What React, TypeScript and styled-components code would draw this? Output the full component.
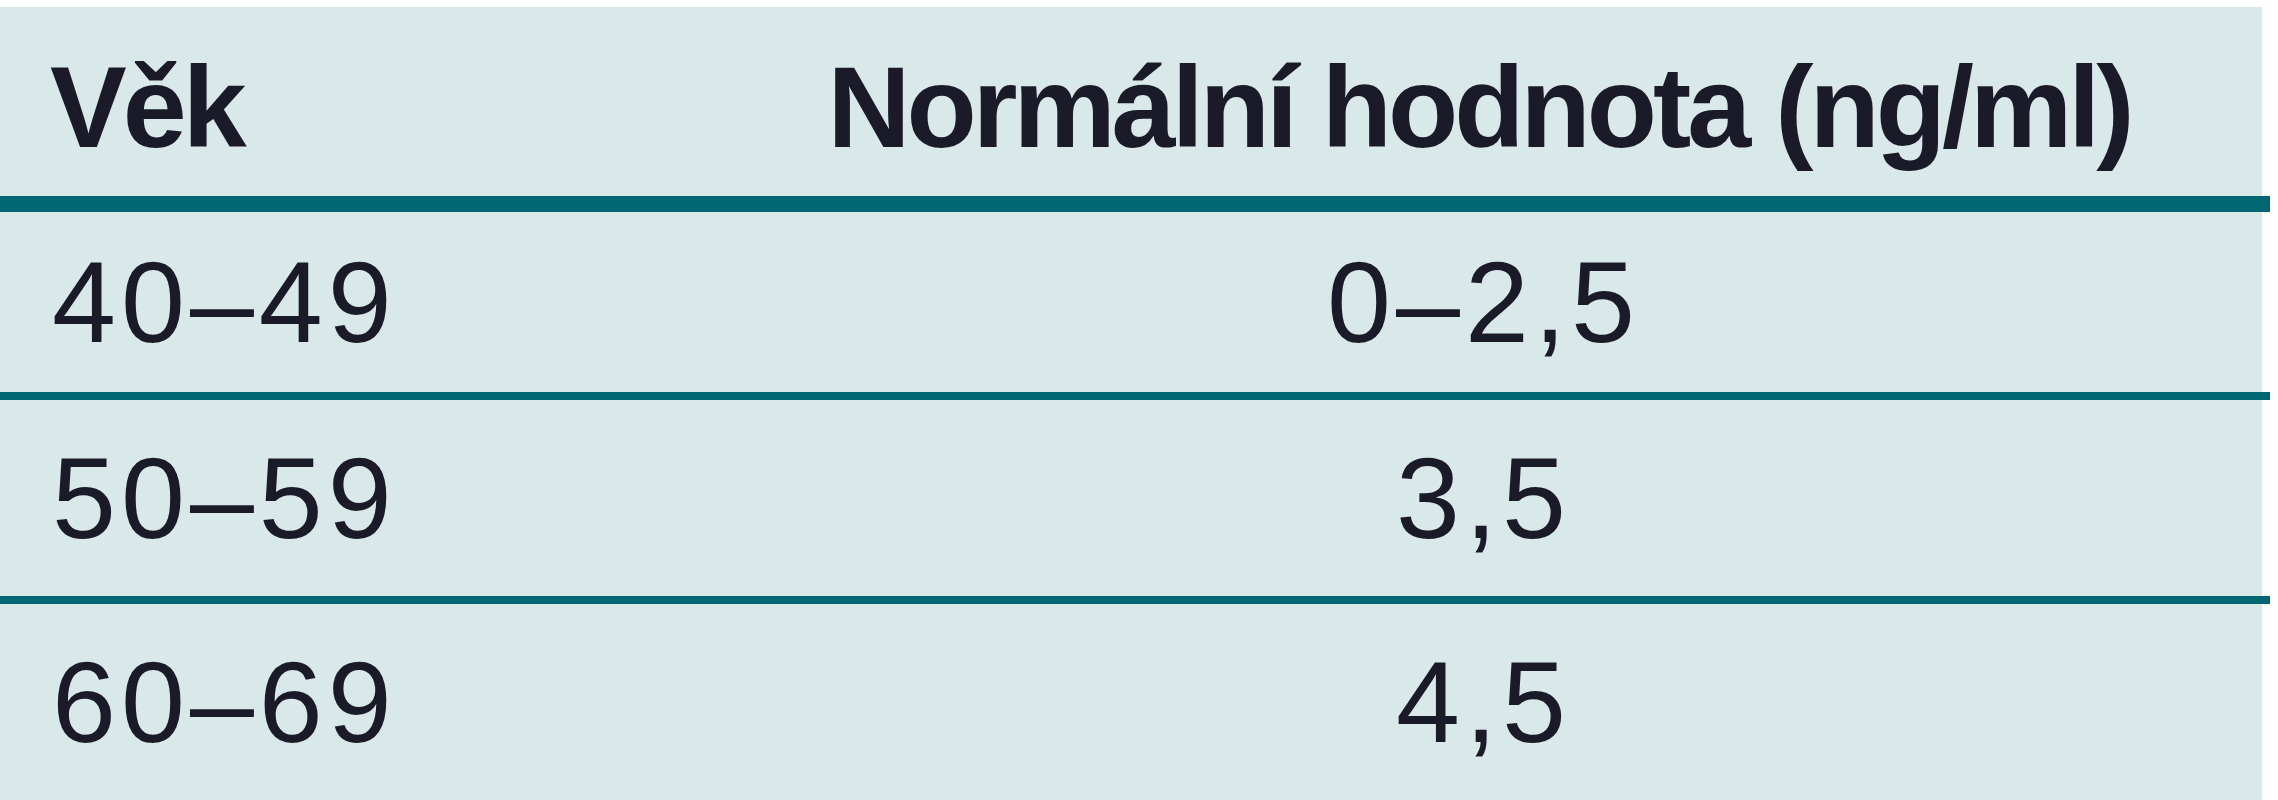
import * as React from 'react';
import styled, {createGlobalStyle} from 'styled-components';

interface IRow {
  age: string;
  value: string;
  height: number;
}

const rows: IRow[] = [
  {age: '40–49', value: '0–2,5', height: 180},
  {age: '50–59', value: '3,5', height: 196},
  {age: '60–69', value: '4,5', height: 196},
];

const GlobalStyle = createGlobalStyle`
  html, body {
    margin: 0;
    padding: 0;
    background: #ffffff;
    overflow: hidden;
  }
  body {
    font-family: "Liberation Sans", Arial, sans-serif;
    color: #1b1a28;
  }
`;

export default function App() {
  return (
    <>
      <GlobalStyle />
      <Page>
        <Table>
          <HeadRow>
            <AgeHead>Věk</AgeHead>
            <ValueHead>Normální hodnota (ng/ml)</ValueHead>
          </HeadRow>
          {rows.map((row, i) => (
            <BodyRow key={row.age} $height={row.height} $last={i === rows.length - 1}>
              <AgeCell>{row.age}</AgeCell>
              <ValueCell>{row.value}</ValueCell>
            </BodyRow>
          ))}
        </Table>
      </Page>
    </>
  );
}

const Page = styled.div`
  padding-top: 7px;
  height: 793px;
`;

const Table = styled.div`
  width: 2262px;
  height: 793px;
  background: #d9e9ea;
  display: flex;
  flex-direction: column;
`;

const HeadRow = styled.div`
  width: 2270px;
  height: 189px;
  box-sizing: content-box;
  border-bottom: 16px solid #00666f;
  display: grid;
  grid-template-columns: 700px 1562px 8px;
  align-items: center;
  padding-top: 0;
`;

const BodyRow = styled.div<{$height: number; $last: boolean}>`
  width: 2270px;
  height: ${p => p.$height}px;
  flex-shrink: 0;
  box-sizing: content-box;
  border-bottom: ${p => (p.$last ? 'none' : '8px solid #00666f')};
  display: grid;
  grid-template-columns: 700px 1562px 8px;
  align-items: center;
`;

const HeadCell = styled.div`
  font-size: 115px;
  line-height: 115px;
  font-weight: 700;
  letter-spacing: -4px;
  padding-top: 12px;
  white-space: nowrap;
`;

const AgeHead = styled(HeadCell)`
  padding-left: 50px;
`;

const ValueHead = styled(HeadCell)`
  text-align: center;
  text-indent: -4px;
`;

const BodyCell = styled.div`
  font-size: 115px;
  line-height: 115px;
  font-weight: 400;
  letter-spacing: 5px;
  white-space: nowrap;
`;

const AgeCell = styled(BodyCell)`
  padding-left: 52px;
`;

const ValueCell = styled(BodyCell)`
  text-align: center;
  text-indent: 5px;
`;
